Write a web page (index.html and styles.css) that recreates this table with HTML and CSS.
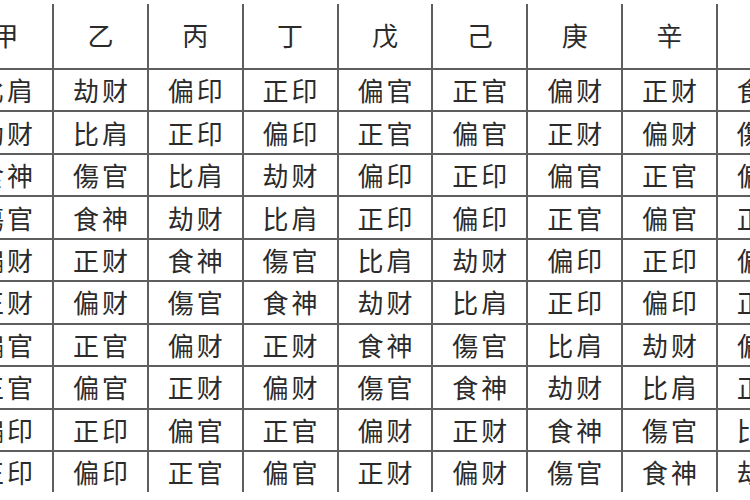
FILE: index.html
```html
<!DOCTYPE html>
<html lang="zh">
<head>
<meta charset="utf-8">
<title>十神表</title>
<link rel="stylesheet" href="styles.css">
</head>
<body>
<div class="table">
  <div class="cell head">甲</div><div class="cell head">乙</div><div class="cell head">丙</div><div class="cell head">丁</div><div class="cell head">戊</div><div class="cell head">己</div><div class="cell head">庚</div><div class="cell head">辛</div><div class="cell head">壬</div><div class="cell head">癸</div>

  <div class="cell">比肩</div><div class="cell">劫财</div><div class="cell">偏印</div><div class="cell">正印</div><div class="cell">偏官</div><div class="cell">正官</div><div class="cell">偏财</div><div class="cell">正财</div><div class="cell">食神</div><div class="cell">傷官</div>

  <div class="cell">劫财</div><div class="cell">比肩</div><div class="cell">正印</div><div class="cell">偏印</div><div class="cell">正官</div><div class="cell">偏官</div><div class="cell">正财</div><div class="cell">偏财</div><div class="cell">傷官</div><div class="cell">食神</div>

  <div class="cell">食神</div><div class="cell">傷官</div><div class="cell">比肩</div><div class="cell">劫财</div><div class="cell">偏印</div><div class="cell">正印</div><div class="cell">偏官</div><div class="cell">正官</div><div class="cell">偏财</div><div class="cell">正财</div>

  <div class="cell">傷官</div><div class="cell">食神</div><div class="cell">劫财</div><div class="cell">比肩</div><div class="cell">正印</div><div class="cell">偏印</div><div class="cell">正官</div><div class="cell">偏官</div><div class="cell">正财</div><div class="cell">偏财</div>

  <div class="cell">偏财</div><div class="cell">正财</div><div class="cell">食神</div><div class="cell">傷官</div><div class="cell">比肩</div><div class="cell">劫财</div><div class="cell">偏印</div><div class="cell">正印</div><div class="cell">偏官</div><div class="cell">正官</div>

  <div class="cell">正财</div><div class="cell">偏财</div><div class="cell">傷官</div><div class="cell">食神</div><div class="cell">劫财</div><div class="cell">比肩</div><div class="cell">正印</div><div class="cell">偏印</div><div class="cell">正官</div><div class="cell">偏官</div>

  <div class="cell">偏官</div><div class="cell">正官</div><div class="cell">偏财</div><div class="cell">正财</div><div class="cell">食神</div><div class="cell">傷官</div><div class="cell">比肩</div><div class="cell">劫财</div><div class="cell">偏印</div><div class="cell">正印</div>

  <div class="cell">正官</div><div class="cell">偏官</div><div class="cell">正财</div><div class="cell">偏财</div><div class="cell">傷官</div><div class="cell">食神</div><div class="cell">劫财</div><div class="cell">比肩</div><div class="cell">正印</div><div class="cell">偏印</div>

  <div class="cell">偏印</div><div class="cell">正印</div><div class="cell">偏官</div><div class="cell">正官</div><div class="cell">偏财</div><div class="cell">正财</div><div class="cell">食神</div><div class="cell">傷官</div><div class="cell">比肩</div><div class="cell">劫财</div>

  <div class="cell">正印</div><div class="cell">偏印</div><div class="cell">正官</div><div class="cell">偏官</div><div class="cell">正财</div><div class="cell">偏财</div><div class="cell">傷官</div><div class="cell">食神</div><div class="cell">劫财</div><div class="cell">比肩</div>
</div>
</body>
</html>
```

FILE: styles.css
```css
html, body {
  margin: 0;
  padding: 0;
  width: 750px;
  height: 500px;
  overflow: hidden;
  background: #ffffff;
}

body {
  padding-top: 4px;
  box-sizing: border-box;
}

.table {
  display: inline-grid;
  grid-template-columns: repeat(10, 92.85px);
  grid-template-rows: 64px repeat(10, 40.44px);
  gap: 2px;
  background: #5e5e5e;
  margin-left: -40.85px;
  font-family: "Noto Sans CJK SC", "Noto Sans CJK TC", sans-serif;
  font-size: 26px;
  letter-spacing: 3px;
  color: #2b2b2b;
}

.cell {
  background: #ffffff;
  display: flex;
  align-items: center;
  justify-content: center;
  padding-left: 3px;
  line-height: 1;
  white-space: nowrap;
}

.head {
  padding-bottom: 2px;
}
```
